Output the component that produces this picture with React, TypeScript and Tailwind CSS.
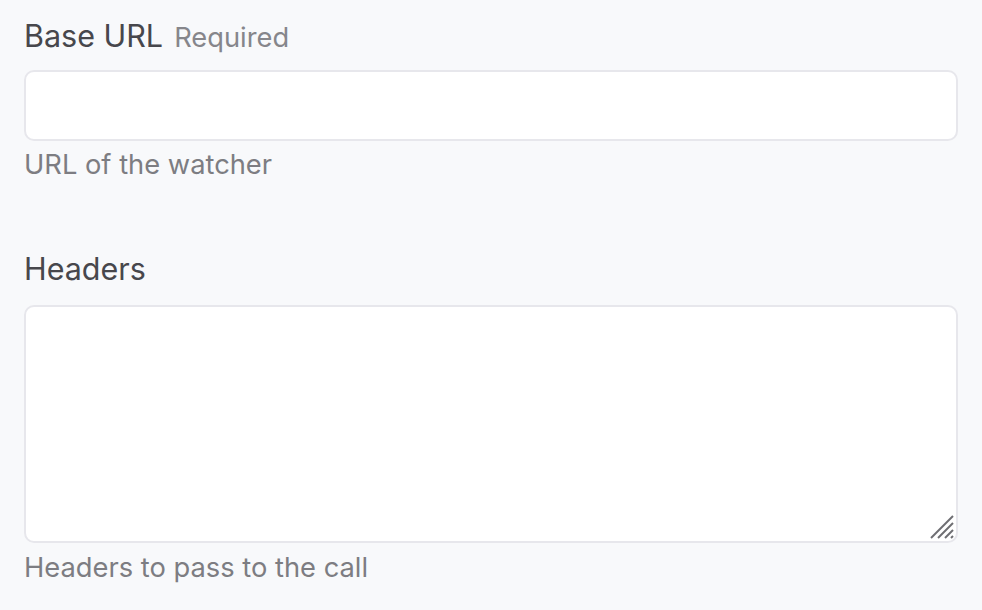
export default function App() {
  return (
    <div className="min-h-screen w-full bg-[#f8f9fb] px-6 pt-[18px] font-['Inter','Liberation_Sans',sans-serif]">
      {/* Base URL */}
      <div className="flex flex-col">
        <label className="flex h-[36px] items-baseline gap-[11px] leading-[36px]">
          <span className="text-[30.5px] text-[#47474c]">Base URL</span>
          <span className="text-[27.3px] text-[#86868b]">Required</span>
        </label>
        <input
          type="text"
          className="mt-[16px] h-[71px] w-full rounded-[10px] border-2 border-[#e7e7ec] bg-white px-4 text-[24px] outline-none"
        />
        <p className="mt-[4px] text-[27.3px] leading-[40px] text-[#7d7d82]">URL of the watcher</p>
      </div>

      {/* Headers */}
      <div className="mt-[66px] flex flex-col">
        <label className="h-[36px] text-[30.5px] leading-[36px] text-[#47474c]">Headers</label>
        <div className="relative mt-[18px]">
          <textarea className="block h-[238px] w-full resize-none rounded-[10px] border-2 border-[#e7e7ec] bg-white px-4 py-3 text-[24px] outline-none" />
          <svg
            className="pointer-events-none absolute bottom-[3px] right-[3px]"
            width="26"
            height="26"
            viewBox="0 0 26 26"
          >
            <g stroke="#6e6e72" strokeWidth="2" strokeLinecap="butt">
              <line x1="2" y1="24" x2="24" y2="2" />
              <line x1="9" y1="24" x2="24" y2="9" />
              <line x1="16" y1="24" x2="24" y2="16" />
              <line x1="22" y1="24" x2="24" y2="22" />
            </g>
          </svg>
        </div>
        <p className="mt-[5px] text-[27.3px] leading-[40px] text-[#7d7d82]">Headers to pass to the call</p>
      </div>
    </div>
  )
}
